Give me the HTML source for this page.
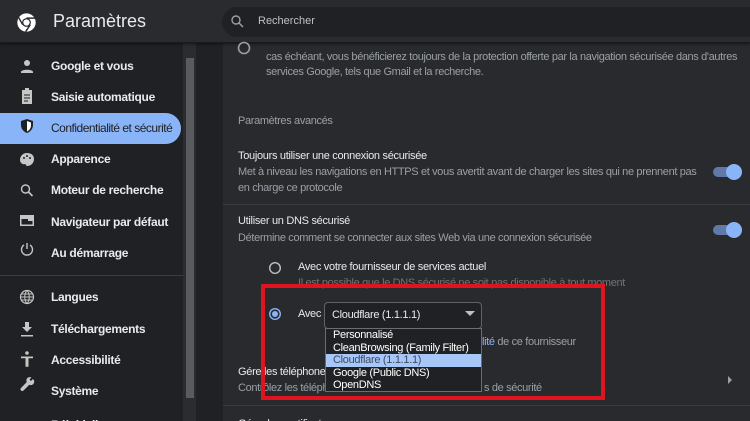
<!DOCTYPE html>
<html><head><meta charset="utf-8"><style>
*{margin:0;padding:0;box-sizing:border-box}
html,body{width:750px;height:421px;overflow:hidden}
body{background:#202124;font-family:"Liberation Sans",Arial,sans-serif;position:relative;color:#e8eaed}
.a{position:absolute;white-space:nowrap}
.hdr{left:0;top:0;width:750px;height:43px;background:#2a2b2e;border-bottom:1px solid #1a1a1c;box-shadow:0 1px 3px rgba(0,0,0,.5)}
.nav{font-size:12px;font-weight:bold;color:#e8eaed;left:51px;letter-spacing:-0.3px}
.t{font-size:11px;color:#e8eaed;letter-spacing:-0.3px}
.d{font-size:11px;color:#9aa0a6;letter-spacing:-0.35px}
.tog{width:26px;height:10px;border-radius:5px;background:#5f7aa8}
.tog:after{content:"";position:absolute;right:-3px;top:-3px;width:16px;height:16px;border-radius:50%;background:#8ab4f8}
.li{left:0;width:155px;height:13px;font-size:11px;color:#fff;padding-left:7px;line-height:13px;letter-spacing:-0.3px}
</style></head><body>
<div class="a" style="left:223px;top:43px;width:527px;height:378px;background:#292a2d"></div>
<div class="a" style="left:183px;top:43px;width:13px;height:378px;background:#2b2c2f"></div>
<div class="a" style="left:186px;top:58px;width:8px;height:340px;background:#5a5b5e"></div>
<div class="a" style="left:0;top:275px;width:183px;height:1px;background:#3c3d40"></div>
<div class="a hdr"></div>
<svg class="a" style="left:16px;top:12px" width="21" height="21" viewBox="0 0 24 24"><circle cx="12" cy="12" r="10.5" fill="#fff"/><circle cx="12" cy="12" r="5" fill="#2a2b2e"/><circle cx="12" cy="12" r="3.6" fill="#fff"/><path d="M12 7H22M7.7 14.5L2.8 6M16.3 14.5L11 22.5" stroke="#2a2b2e" stroke-width="1.6"/></svg>
<div class="a" style="left:53px;top:11px;font-size:18px;color:#e8eaed">Paramètres</div>
<div class="a" style="left:222px;top:7px;width:528px;height:30px;border-radius:15px 0 0 15px;background:#202124"></div>
<svg class="a" style="left:231px;top:15px" width="13" height="13" viewBox="0 0 13 13"><circle cx="5" cy="5" r="4" stroke="#9aa0a6" stroke-width="1.4" fill="none"/><path d="M8 8L12 12" stroke="#9aa0a6" stroke-width="1.5"/></svg>
<div class="a" style="left:258px;top:15px;font-size:11px;color:#bdc1c6">Rechercher</div>

<div class="a" style="left:0;top:113px;width:181px;height:31px;border-radius:0 16px 16px 0;background:#8ab4f8"></div>
<div class="a nav" style="top:59px">Google et vous</div>
<div class="a nav" style="top:90px">Saisie automatique</div>
<div class="a nav" style="top:121px;color:#202124;font-weight:normal;letter-spacing:-0.5px">Confidentialité et sécurité</div>
<div class="a nav" style="top:152px">Apparence</div>
<div class="a nav" style="top:183px">Moteur de recherche</div>
<div class="a nav" style="top:215px">Navigateur par défaut</div>
<div class="a nav" style="top:246px">Au démarrage</div>
<div class="a nav" style="top:290px">Langues</div>
<div class="a nav" style="top:322px">Téléchargements</div>
<div class="a nav" style="top:353px">Accessibilité</div>
<div class="a nav" style="top:384px">Système</div>
<div class="a nav" style="top:418px">Réinitialiser et nettoyer</div>
<svg class="a" style="left:19px;top:57px" width="16" height="364" viewBox="0 0 16 364" fill="#c4c7c5">
<circle cx="8" cy="6" r="3"/><path d="M2 15c0-3 12-3 12 0v1H2z"/>
<path d="M3 33h10v14H3z M6 31h4v3H6z" /><path d="M5 38h6M5 41h6M5 44h4" stroke="#202124" stroke-width="1"/>
<path d="M8 62l6 2v4c0 4-3 7-6 8-3-1-6-4-6-8v-4z" fill="#202124"/><path d="M8 64l4 1.5v3c0 3-2 5-4 6z" fill="#fff"/>
<path d="M8 96c-4 0-7 3-7 7 0 3 3 5 5 4 1 0 1 2 2 2 4 0 7-3 7-7s-3-6-7-6z"/><circle cx="5" cy="101" r="1" fill="#202124"/><circle cx="8" cy="99" r="1" fill="#202124"/><circle cx="11" cy="101" r="1" fill="#202124"/>
<circle cx="6.5" cy="132" r="4" stroke="#c4c7c5" stroke-width="1.4" fill="none"/><path d="M9.5 135l4 4" stroke="#c4c7c5" stroke-width="1.6"/>
<path d="M1 158h14v11H1z M2.5 162h11v5.5h-11z" fill-rule="evenodd"/><path d="M9 162h4.5v2H9z" />
<path d="M5 188a5.5 5.5 0 1 0 6 0M8 186v6" stroke="#c4c7c5" stroke-width="1.4" fill="none"/>
<circle cx="8" cy="240" r="6.5" stroke="#c4c7c5" stroke-width="1.2" fill="none"/><path d="M1.5 240h13M8 233.5c-3 3-3 10 0 13M8 233.5c3 3 3 10 0 13M2.5 237h11M2.5 243h11" stroke="#c4c7c5" stroke-width="1" fill="none"/>
<path d="M6 265h4v5h3l-5 5-5-5h3z M2 278h12v1.5H2z"/>
<circle cx="8" cy="296" r="1.8"/><path d="M2 299.5h12v1.8H9.5v8.5H8v-4H8v4H6.5v-8.5H2z"/>
<path d="M14 322l-2 2-1.5-1.5 2-2c-2-1-4.5 0-5 2-.3 1 0 2 .3 2.5L2 331c-.8.8-.8 1.8 0 2.5s1.7.8 2.5 0l5.8-5.8c.6.3 1.5.5 2.5.3 2-.5 3-3 2-5z"/>
</svg>

<svg class="a" style="left:237px;top:41px" width="14" height="14"><circle cx="7" cy="7" r="5.5" stroke="#9aa0a6" stroke-width="1.6" fill="none"/></svg>
<div class="a d" style="left:266px;top:51px">cas échéant, vous bénéficierez toujours de la protection offerte par la navigation sécurisée dans d'autres</div>
<div class="a d" style="left:266px;top:66px">services Google, tels que Gmail et la recherche.</div>
<div class="a d" style="left:238px;top:115px">Paramètres avancés</div>
<div class="a t" style="left:238px;top:150px">Toujours utiliser une connexion sécurisée</div>
<div class="a d" style="left:238px;top:166px">Met à niveau les navigations en HTTPS et vous avertit avant de charger les sites qui ne prennent pas</div>
<div class="a d" style="left:238px;top:182px">en charge ce protocole</div>
<div class="a tog" style="left:713px;top:167px"></div>
<div class="a" style="left:223px;top:204px;width:527px;height:1px;background:#3c3d40"></div>
<div class="a t" style="left:238px;top:215px">Utiliser un DNS sécurisé</div>
<div class="a d" style="left:238px;top:232px">Détermine comment se connecter aux sites Web via une connexion sécurisée</div>
<div class="a tog" style="left:713px;top:225px"></div>
<svg class="a" style="left:268px;top:261px" width="14" height="14"><circle cx="7" cy="7" r="5.3" stroke="#bdc1c6" stroke-width="1.4" fill="none"/></svg>
<div class="a t" style="left:298px;top:261px">Avec votre fournisseur de services actuel</div>
<div class="a d" style="left:298px;top:277px;color:#6f7378">Il est possible que le DNS sécurisé ne soit pas disponible à tout moment</div>
<svg class="a" style="left:268px;top:307px" width="14" height="14"><circle cx="7" cy="7" r="5.3" stroke="#8ab4f8" stroke-width="1.4" fill="none"/><circle cx="7" cy="7" r="3" fill="#8ab4f8"/></svg>
<div class="a t" style="left:298px;top:308px">Avec</div>
<div class="a" style="left:324px;top:302px;width:158px;height:27px;border:1px solid #5f6368;border-radius:4px;background:#202124"></div>
<div class="a t" style="left:332px;top:309px">Cloudflare (1.1.1.1)</div>
<svg class="a" style="left:465px;top:311px" width="10" height="6"><path d="M0 0h10L5 5z" fill="#bdc1c6"/></svg>
<div class="a d" style="left:482px;top:336px"><span style="color:#8ab4f8">lité</span> de ce fournisseur</div>
<div class="a t" style="left:238px;top:366px">Gére les téléphone</div>
<div class="a d" style="left:238px;top:382px">Contrôlez les téléph</div>
<div class="a d" style="left:484px;top:382px">s de sécurité</div>
<svg class="a" style="left:728px;top:376px" width="5" height="8"><path d="M0 0l4 4-4 4z" fill="#9aa0a6"/></svg>
<div class="a" style="left:223px;top:405px;width:527px;height:1px;background:#3c3d40"></div>
<div class="a t" style="left:238px;top:418px">Gérer les certificats</div>

<div class="a" style="left:325px;top:328px;width:157px;height:64px;background:#202124;border:1px solid #6a6d71">
<div class="a li" style="top:0">Personnalisé</div>
<div class="a li" style="top:13px">CleanBrowsing (Family Filter)</div>
<div class="a li" style="top:25px;background:#a7c7f9;color:#3c4a5e">Cloudflare (1.1.1.1)</div>
<div class="a li" style="top:38px">Google (Public DNS)</div>
<div class="a li" style="top:50px">OpenDNS</div>
</div>
<div class="a" style="left:261px;top:284px;width:344px;height:116px;border:4px solid #e0141e"></div>
</body></html>
